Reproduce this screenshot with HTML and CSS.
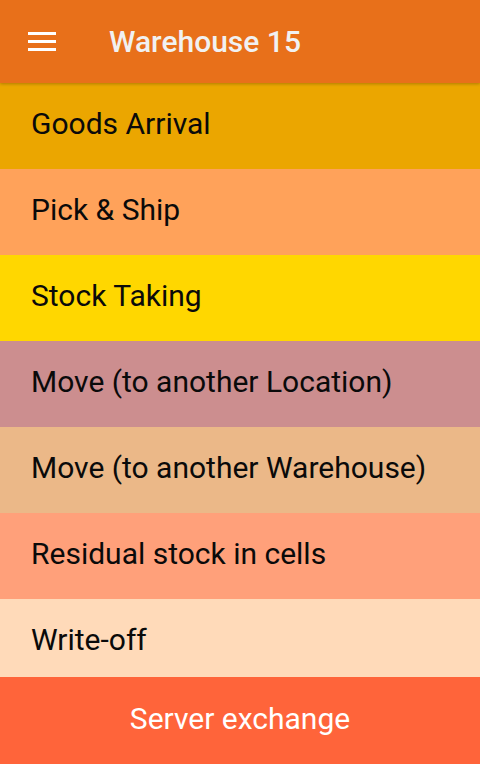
FILE: index.html
```html
<!DOCTYPE html>
<html>
<head>
<meta charset="utf-8">
<link rel="stylesheet" href="styles.css">
</head>
<body>
<div class="app">
  <header class="toolbar">
    <svg class="menu" width="28" height="20" viewBox="0 0 28 20">
      <rect x="0" y="0" width="28" height="3" fill="#fff"/>
      <rect x="0" y="8" width="28" height="3" fill="#fff"/>
      <rect x="0" y="16" width="28" height="3" fill="#fff"/>
    </svg>
    <h1 class="title">Warehouse 15</h1>
  </header>
  <main class="list">
    <div class="item c1">Goods Arrival</div>
    <div class="item c2">Pick &amp; Ship</div>
    <div class="item c3">Stock Taking</div>
    <div class="item c4">Move (to another Location)</div>
    <div class="item c5">Move (to another Warehouse)</div>
    <div class="item c6">Residual stock in cells</div>
    <div class="item c7">Write-off</div>
  </main>
  <footer class="exchange">Server exchange</footer>
</div>
</body>
</html>
```

FILE: styles.css
```css
html, body {
  margin: 0;
  padding: 0;
  height: 100%;
}
body {
  font-family: Roboto, "Liberation Sans", sans-serif;
}
.app {
  width: 480px;
  height: 764px;
  display: flex;
  flex-direction: column;
  overflow: hidden;
}
.toolbar {
  flex: 0 0 83px;
  height: 83px;
  background: #e8701a;
  display: flex;
  align-items: center;
  padding-left: 28px;
  box-sizing: border-box;
  position: relative;
  z-index: 2;
  box-shadow: 0 1px 3px rgba(0,0,0,0.25);
}
.menu {
  display: block;
}
.title {
  margin: 0 0 0 53px;
  font-size: 30px;
  line-height: 1;
  font-weight: 500;
  color: #f1f1f1;
}
.list {
  flex: 1 1 auto;
  overflow: hidden;
  display: flex;
  flex-direction: column;
}
.item {
  flex: 0 0 86px;
  height: 86px;
  display: flex;
  align-items: center;
  padding-left: 31px;
  padding-bottom: 5px;
  box-sizing: border-box;
  font-size: 30px;
  color: #0a0a0a;
}
.c1 { background: #eba600; }
.c2 { background: #ffa25a; }
.c3 { background: #ffd700; }
.c4 { background: #cc8e8f; }
.c5 { background: #ebb888; }
.c6 { background: #ffa07a; }
.c7 { background: #ffdab9; }
.exchange {
  flex: 0 0 87px;
  height: 87px;
  background: #ff643a;
  color: #fff;
  font-size: 30px;
  padding-bottom: 4px;
  box-sizing: border-box;
  display: flex;
  align-items: center;
  justify-content: center;
}
```
